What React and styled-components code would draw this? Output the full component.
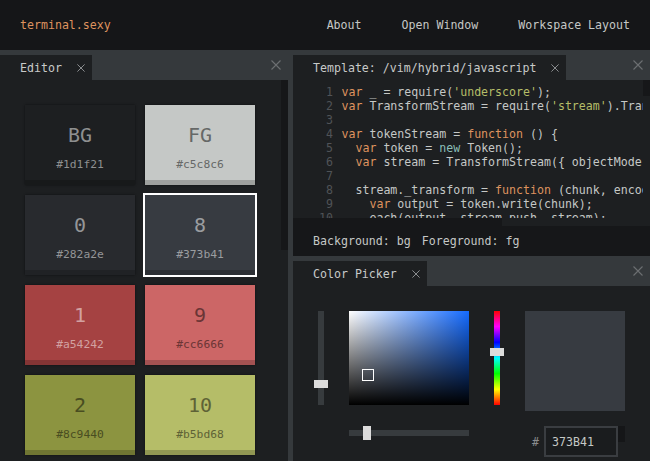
import React from "react";
import styled, { createGlobalStyle } from "styled-components";

const GlobalStyle = createGlobalStyle`
  html, body {
    margin: 0;
    height: 100%;
    overflow: hidden;
    background: #35393c;
  }
  body {
    font-family: "DejaVu Sans Mono", "Liberation Mono", monospace;
    font-size: 11.6px;
    color: #c5c8c6;
  }
  #root {
    height: 100%;
  }
`;

// palette helpers
const toRgb = (hex) => [1, 3, 5].map((i) => parseInt(hex.slice(i, i + 2), 16));
const mix = (hex, target, t) => {
  const [r, g, b] = toRgb(hex);
  const out = [r, g, b].map((c) => Math.round(c + (target - c) * t));
  return `rgb(${out.join(",")})`;
};
const isDark = (hex) => {
  const [r, g, b] = toRgb(hex);
  return 0.299 * r + 0.587 * g + 0.114 * b < 110;
};

const swatches = [
  { name: "BG", hex: "#1d1f21" },
  { name: "FG", hex: "#c5c8c6" },
  { name: "0", hex: "#282a2e" },
  { name: "8", hex: "#373b41", selected: true },
  { name: "1", hex: "#a54242" },
  { name: "9", hex: "#cc6666" },
  { name: "2", hex: "#8c9440" },
  { name: "10", hex: "#b5bd68" },
];

const code = [
  [["k", "var"], ["p", " _ = require("], ["s", "'underscore'"], ["p", ");"]],
  [["k", "var"], ["p", " TransformStream = require("], ["s", "'stream'"], ["p", ").Transform;"]],
  [],
  [["k", "var"], ["p", " tokenStream = "], ["k", "function"], ["p", " () {"]],
  [["p", "  "], ["k", "var"], ["p", " token = "], ["n", "new"], ["p", " Token();"]],
  [["p", "  "], ["k", "var"], ["p", " stream = TransformStream({ objectMode: true });"]],
  [],
  [["p", "  stream._transform = "], ["k", "function"], ["p", " (chunk, encoding, done) {"]],
  [["p", "    "], ["k", "var"], ["p", " output = token.write(chunk);"]],
  [["p", "    each(output, stream.push, stream);"]],
];

const tokenColors = { k: "#de935f", s: "#b5bd68", n: "#8abeb7", p: "#c5c8c6" };

const Cross = ({ size, color }) => (
  <svg width={size} height={size} viewBox="0 0 10 10">
    <path d="M0.5 0.5L9.5 9.5M9.5 0.5L0.5 9.5" stroke={color} strokeWidth="1.1" fill="none" />
  </svg>
);

const Page = styled.div`
  height: 100vh;
  display: flex;
  flex-direction: column;
`;

const Header = styled.header`
  height: 50px;
  flex-shrink: 0;
  background: #151618;
  display: flex;
  align-items: center;
  justify-content: space-between;
`;

const Logo = styled.div`
  padding: 0 20px;
  color: #de935f;
`;

const Nav = styled.nav`
  display: flex;
`;

const NavItem = styled.a`
  padding: 0 20px;
  color: #c5c8c6;
  text-decoration: none;
`;

const Workspace = styled.div`
  flex: 1;
  min-height: 0;
  display: grid;
  grid-template-columns: 288px minmax(0, 1fr);
  column-gap: 5px;
`;

const Column = styled.div`
  display: flex;
  flex-direction: column;
  min-height: 0;
  min-width: 0;
`;

const Panel = styled.section`
  display: flex;
  flex-direction: column;
  min-height: 0;
  min-width: 0;
  flex: ${(p) => (p.$grow ? 1 : "none")};
`;

const TabBar = styled.div`
  height: 30px;
  flex-shrink: 0;
  display: flex;
  align-items: flex-end;
  justify-content: space-between;
`;

const Tab = styled.div`
  height: 25px;
  display: flex;
  align-items: center;
  gap: 15px;
  padding: 0 7px 0 20px;
  background: #1d1f21;
  color: #c8cac9;
  white-space: nowrap;
`;

const BarClose = styled.div`
  align-self: center;
  display: flex;
  margin-right: 7px;
`;

const Body = styled.div`
  flex: 1;
  min-height: 0;
  background: #1d1f21;
  overflow: hidden;
`;

const EditorBody = styled(Body)`
  display: flex;
`;

const SwatchGrid = styled.div`
  flex: 1;
  display: grid;
  grid-template-columns: repeat(2, 110px);
  grid-auto-rows: 80px;
  gap: 10px;
  padding: 25px 0 0 25px;
  align-content: start;
`;

const Swatch = styled.div`
  box-sizing: border-box;
  height: 80px;
  display: flex;
  flex-direction: column;
  align-items: center;
  padding-top: 20px;
  background: ${(p) => p.$hex};
  border-bottom: 5px solid ${(p) => mix(p.$hex, 0, 0.2)};
  color: ${(p) => (isDark(p.$hex) ? mix(p.$hex, 255, 0.5) : mix(p.$hex, 0, 0.48))};
  box-shadow: ${(p) =>
    p.$selected ? "0 0 0 2px #ffffff" : "0 0 2px rgba(0, 0, 0, 0.55)"};
`;

const SwatchName = styled.div`
  font-size: 20px;
  line-height: 20px;
`;

const SwatchHex = styled.div`
  font-size: 11.3px;
  line-height: 14px;
  margin-top: 13px;
`;

const VScroll = styled.div`
  width: 7px;
  flex-shrink: 0;
`;

const VThumb = styled.div`
  height: ${(p) => p.$h}px;
  background: #161719;
`;

const TemplateBody = styled(Body)`
  flex: none;
  height: 176px;
  display: flex;
  flex-direction: column;
`;

const CodeWrap = styled.div`
  height: 138px;
  display: flex;
  overflow: hidden;
`;

const CodeScroller = styled.div`
  flex: 1;
  min-width: 0;
  overflow: hidden;
  padding-top: 5px;
`;

const CodeLine = styled.div`
  display: flex;
  height: 14px;
  line-height: 14px;
  white-space: pre;
`;

const LineNo = styled.span`
  width: 40px;
  flex-shrink: 0;
  text-align: right;
  color: #505357;
`;

const CodeText = styled.span`
  margin-left: 8.5px;
`;

const Token = styled.span`
  color: ${(p) => tokenColors[p.$kind]};
`;

const HScroll = styled.div`
  height: 8px;
  flex-shrink: 0;
`;

const HThumb = styled.div`
  width: 209px;
  height: 100%;
  background: #161719;
`;

const StatusBar = styled.div`
  height: 30px;
  flex-shrink: 0;
  display: flex;
  align-items: center;
  gap: 11px;
  padding-left: 20px;
  background: #161719;
`;

const PickerBody = styled(Body)`
  display: grid;
  grid-template-columns: 14px 120px 14px 100px;
  column-gap: 21px;
  row-gap: 15px;
  padding: 25px 0 0 21px;
  align-content: start;
  align-items: start;
`;

const VSlider = styled.div`
  position: relative;
  height: 94px;
  display: flex;
  justify-content: center;
`;

const VTrack = styled.div`
  width: 6px;
  height: 100%;
  background: ${(p) =>
    p.$hue
      ? "linear-gradient(to bottom, #ff0000, #ff00ff 16.6%, #0000ff 33.3%, #00ffff 50%, #00ff00 66.6%, #ffff00 83.3%, #ff0000)"
      : "#373b3e"};
`;

const Knob = styled.div`
  position: absolute;
  background: #dcdcdc;
  width: ${(p) => (p.$vertical ? 8 : 14)}px;
  height: ${(p) => (p.$vertical ? 14 : 8)}px;
`;

const SatVal = styled.div`
  position: relative;
  width: 120px;
  height: 94px;
  background: linear-gradient(to top, #000000, rgba(0, 0, 0, 0)),
    linear-gradient(to right, #ffffff, hsl(218, 100%, 54%));
`;

const Pointer = styled.div`
  position: absolute;
  left: 13px;
  top: 58px;
  width: 12px;
  height: 12px;
  box-sizing: border-box;
  border: 1.5px solid #ffffff;
`;

const Preview = styled.div`
  width: 100px;
  height: 100px;
  background: ${(p) => p.$hex};
`;

const HSlider = styled.div`
  grid-column: 2;
  position: relative;
  height: 14px;
  display: flex;
  align-items: center;
`;

const HTrack = styled.div`
  width: 100%;
  height: 6px;
  background: #373b3e;
`;

const HexRow = styled.div`
  grid-column: 4;
  display: flex;
  justify-content: flex-end;
  align-items: center;
`;

const Hash = styled.span`
  color: #8a8c8e;
  margin-right: 5px;
`;

const HexInput = styled.input`
  box-sizing: border-box;
  width: 74px;
  height: 31px;
  padding: 0 6px;
  border: 2px solid #3a3d41;
  background: #1a1c1e;
  color: #c5c8c6;
  font: inherit;
  outline: none;
`;

const HexSide = styled.div`
  align-self: flex-start;
  width: 7px;
  height: 16px;
  background: #151618;
`;

const PanelTabs = ({ title }) => (
  <TabBar>
    <Tab>
      {title}
      <Cross size={8} color="#9a9c9e" />
    </Tab>
    <BarClose>
      <Cross size={10} color="#6c6f72" />
    </BarClose>
  </TabBar>
);

export default function App() {
  return (
    <Page>
      <GlobalStyle />
      <Header>
        <Logo>terminal.sexy</Logo>
        <Nav>
          <NavItem href="#">About</NavItem>
          <NavItem href="#">Open Window</NavItem>
          <NavItem href="#">Workspace Layout</NavItem>
        </Nav>
      </Header>
      <Workspace>
        <Panel $grow>
          <PanelTabs title="Editor" />
          <EditorBody>
            <SwatchGrid>
              {swatches.map((s) => (
                <Swatch key={s.name} $hex={s.hex} $selected={s.selected}>
                  <SwatchName>{s.name}</SwatchName>
                  <SwatchHex>{s.hex}</SwatchHex>
                </Swatch>
              ))}
            </SwatchGrid>
            <VScroll>
              <VThumb $h={170} />
            </VScroll>
          </EditorBody>
        </Panel>
        <Column>
          <Panel>
            <PanelTabs title="Template: /vim/hybrid/javascript" />
            <TemplateBody>
              <CodeWrap>
                <CodeScroller>
                  {code.map((line, i) => (
                    <CodeLine key={i}>
                      <LineNo>{i + 1}</LineNo>
                      <CodeText>
                        {line.map(([kind, text], j) => (
                          <Token key={j} $kind={kind}>
                            {text}
                          </Token>
                        ))}
                      </CodeText>
                    </CodeLine>
                  ))}
                </CodeScroller>
                <VScroll>
                  <VThumb $h={16} />
                </VScroll>
              </CodeWrap>
              <HScroll>
                <HThumb />
              </HScroll>
              <StatusBar>
                <span>Background: bg</span>
                <span>Foreground: fg</span>
              </StatusBar>
            </TemplateBody>
          </Panel>
          <Panel $grow>
            <PanelTabs title="Color Picker" />
            <PickerBody>
              <VSlider>
                <VTrack />
                <Knob style={{ top: 69, left: 0 }} />
              </VSlider>
              <SatVal>
                <Pointer />
              </SatVal>
              <VSlider>
                <VTrack $hue />
                <Knob style={{ top: 37, left: 0 }} />
              </VSlider>
              <Preview $hex="#373b41" />
              <HSlider>
                <HTrack />
                <Knob $vertical style={{ left: 14, top: 0 }} />
              </HSlider>
              <HexRow>
                <Hash>#</Hash>
                <HexInput readOnly value="373B41" />
                <HexSide />
              </HexRow>
            </PickerBody>
          </Panel>
        </Column>
      </Workspace>
    </Page>
  );
}
